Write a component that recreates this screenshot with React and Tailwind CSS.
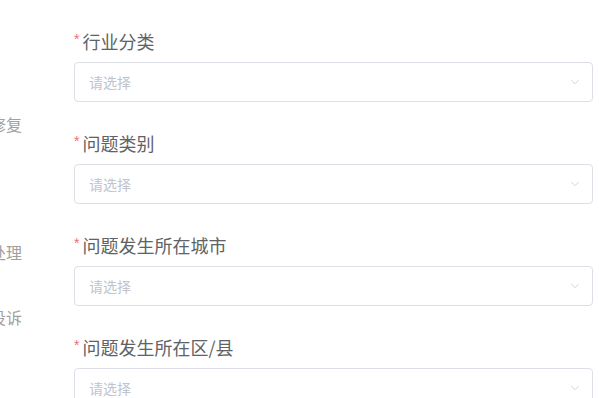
import { ChevronDown } from 'lucide-react';

const fields = ['行业分类', '问题类别', '问题发生所在城市', '问题发生所在区/县'];

function FormItem({ label }) {
  return (
    <div className="flex flex-col">
      <label className="h-6 flex items-center text-[18px] leading-6 text-[#606266]">
        <span className="text-[#f56c6c] text-[14px] mr-[3px] -mt-1" style={{ fontFamily: '"Liberation Sans", sans-serif' }}>*</span>
        {label}
      </label>
      <div className="mt-[9px] h-10 border border-[#dcdfe6] rounded bg-white flex items-center justify-between pl-[14px] pr-[10px]">
        <span className="text-[14px] text-[#c0c4cc]">请选择</span>
        <ChevronDown size={14} strokeWidth={1.2} className="text-[#c0c4cc]" />
      </div>
    </div>
  );
}

function App() {
  return (
    <div
      className="w-[599px] h-[398px] overflow-hidden bg-white flex"
      style={{ fontFamily: '"Noto Sans CJK SC", "Noto Sans", sans-serif' }}
    >
      <div className="w-[22px] shrink-0 flex flex-col text-[16px] leading-6 text-[#a0a0a0]">
        <div className="mt-[112px] flex justify-end whitespace-nowrap">修复</div>
        <div className="mt-[104px] flex justify-end whitespace-nowrap">处理</div>
        <div className="mt-[41px] flex justify-end whitespace-nowrap">投诉</div>
      </div>
      <div className="ml-[52px] w-[519px] pt-[29px] flex flex-col gap-[29px]">
        {fields.map(f => (
          <FormItem key={f} label={f} />
        ))}
      </div>
    </div>
  );
}

export default App;
